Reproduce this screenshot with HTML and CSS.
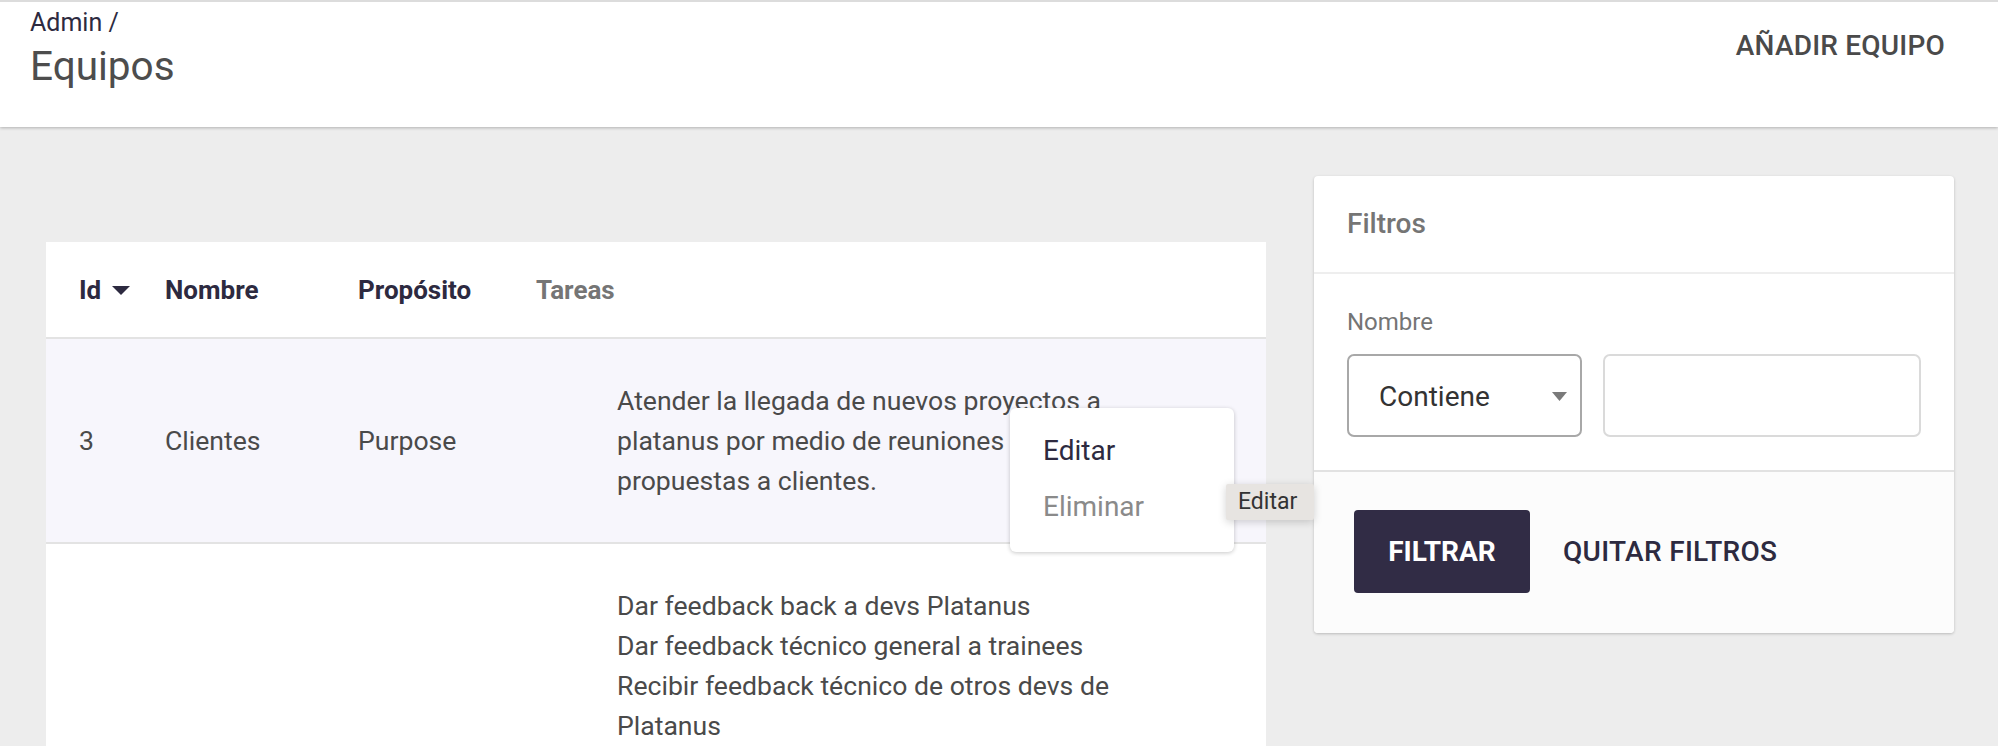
FILE: index.html
```html
<!DOCTYPE html>
<html lang="es">
<head>
<meta charset="utf-8">
<title>Equipos</title>
<link rel="stylesheet" href="styles.css">
</head>
<body>
<header class="topbar">
  <div class="titles">
    <div class="crumb">Admin /</div>
    <h1 class="title">Equipos</h1>
  </div>
  <a class="add-btn">AÑADIR EQUIPO</a>
</header>

<main class="content">
  <section class="table-col">
    <div class="table-card">
      <div class="row head">
        <div class="cell sort">Id
          <svg class="sort-icon" width="18" height="9" viewBox="0 0 18 9"><path d="M0 0H18L9 9Z" fill="#2d2a40"/></svg>
        </div>
        <div class="cell">Nombre</div>
        <div class="cell">Propósito</div>
        <div class="cell muted">Tareas</div>
      </div>

      <div class="row body hover">
        <div class="cell">3</div>
        <div class="cell">Clientes</div>
        <div class="cell">Purpose</div>
        <div class="cell tasks">
          <p>Atender la llegada de nuevos proyectos a platanus por medio de reuniones y envío de propuestas a clientes.</p>
        </div>
        <div class="menu">
          <div class="menu-item">Editar</div>
          <div class="menu-item disabled">Eliminar</div>
        </div>
        <div class="tooltip">Editar</div>
      </div>

      <div class="row body">
        <div class="cell"></div>
        <div class="cell"></div>
        <div class="cell"></div>
        <div class="cell tasks">
          <p>Dar feedback back a devs Platanus</p>
          <p>Dar feedback técnico general a trainees</p>
          <p>Recibir feedback técnico de otros devs de Platanus</p>
        </div>
      </div>
    </div>
  </section>

  <aside class="filters">
    <div class="filters-head">Filtros</div>
    <div class="filters-body">
      <label class="field-label">Nombre</label>
      <div class="field-row">
        <div class="select">
          <span>Contiene</span>
          <svg width="15" height="9" viewBox="0 0 15 9"><path d="M0 0H15L7.5 9Z" fill="#7a7a7a"/></svg>
        </div>
        <div class="input"></div>
      </div>
    </div>
    <div class="filters-foot">
      <button class="btn-primary">FILTRAR</button>
      <button class="btn-text">QUITAR FILTROS</button>
    </div>
  </aside>
</main>
</body>
</html>
```

FILE: styles.css
```css
* { box-sizing: border-box; }

html, body {
  margin: 0;
  height: 100%;
  overflow: hidden;
}

body {
  background: #ededed;
  font-family: Roboto, "Liberation Sans", Arial, sans-serif;
  color: #4a4a4a;
}

.topbar {
  display: flex;
  justify-content: space-between;
  align-items: flex-start;
  height: 127px;
  background: #ffffff;
  border-top: 2px solid #dcdcdc;
  padding: 7px 53px 0 30px;
  box-shadow: 0 1px 3px rgba(0, 0, 0, 0.25);
  position: relative;
  z-index: 1;
}

.crumb {
  font-size: 25px;
  line-height: 27px;
  color: #2d2a40;
}

.title {
  margin: 6px 0 0;
  font-size: 40.5px;
  line-height: 48px;
  font-weight: 400;
  color: #4d4d4d;
}

.add-btn {
  margin-top: 20px;
  font-size: 28px;
  line-height: 33px;
  font-weight: 500;
  color: #4a4a4a;
  letter-spacing: 0.2px;
}

.content {
  display: flex;
  align-items: flex-start;
  gap: 48px;
  padding: 49px 44px 0 46px;
}

.table-col {
  flex: 1;
  padding-top: 66px;
}

.table-card {
  background: #ffffff;
}

.row {
  display: grid;
  grid-template-columns: 86px 193px 178px 1fr;
  align-items: center;
  padding-left: 33px;
  position: relative;
}

.row.head {
  height: 97px;
  border-bottom: 2px solid #e3e3e3;
  font-size: 26px;
  font-weight: 700;
  color: #2d2a40;
}

.row.head .muted {
  color: #757575;
}

.sort {
  display: flex;
  align-items: center;
  gap: 11px;
}

.sort-icon {
  margin-top: 2px;
}

.row.body {
  padding-top: 42px;
  padding-bottom: 41px;
  font-size: 26.6px;
  line-height: 40px;
  color: #4a4a4a;
  border-bottom: 2px solid #e3e3e3;
}

.row.hover {
  background: #f7f6fc;
}

.row.body:last-child {
  border-bottom: none;
  padding-bottom: 80px;
}

.tasks {
  padding-left: 81px;
}

.tasks p {
  margin: 0;
  max-width: 545px;
}

.menu {
  position: absolute;
  left: 964px;
  top: 69px;
  width: 224px;
  height: 144px;
  background: #ffffff;
  border-radius: 6px;
  box-shadow: 0 1px 4px rgba(0, 0, 0, 0.22);
  padding: 15px 0 0 33px;
  z-index: 2;
  line-height: 56px;
}

.menu-item {
  font-size: 28px;
  line-height: 56px;
  color: #2d2a40;
}

.menu-item.disabled {
  color: #8a8a8a;
}

.tooltip {
  position: absolute;
  left: 1180px;
  top: 145px;
  width: 88px;
  height: 36px;
  background: #e7e4e1;
  color: #333333;
  font-size: 23px;
  line-height: 36px;
  padding-left: 12px;
  border-radius: 2px;
  box-shadow: 0 2px 8px rgba(0, 0, 0, 0.18);
  z-index: 3;
}

.filters {
  width: 640px;
  background: #ffffff;
  border-radius: 4px;
  box-shadow: 0 1px 3px rgba(0, 0, 0, 0.22);
  overflow: hidden;
}

.filters-head {
  height: 98px;
  display: flex;
  align-items: center;
  padding: 0 33px 2px;
  font-size: 28px;
  line-height: 33px;
  font-weight: 500;
  color: #757575;
  border-bottom: 2px solid #eeeeee;
}

.filters-body {
  padding: 34px 33px 33px;
  border-bottom: 2px solid #e2e2e2;
}

.field-label {
  display: block;
  font-size: 24px;
  line-height: 28px;
  color: #757575;
}

.field-row {
  display: flex;
  gap: 21px;
  margin-top: 18px;
}

.select {
  width: 235px;
  height: 83px;
  border: 2px solid #a8a8a8;
  border-radius: 7px;
  display: flex;
  align-items: center;
  justify-content: space-between;
  padding: 2px 13px 0 30px;
  font-size: 28px;
  color: #333333;
}

.input {
  width: 318px;
  height: 83px;
  border: 2px solid #dadada;
  border-radius: 7px;
}

.filters-foot {
  height: 161px;
  display: flex;
  align-items: center;
  gap: 33px;
  padding: 0 40px 2px;
  background: #fcfcfc;
}

.btn-primary {
  width: 176px;
  height: 83px;
  border: none;
  border-radius: 4px;
  background: #312c45;
  color: #ffffff;
  font-family: inherit;
  font-size: 28px;
  font-weight: 700;
  padding: 0;
}

.btn-text {
  border: none;
  background: none;
  padding: 0;
  font-family: inherit;
  font-size: 28px;
  font-weight: 500;
  letter-spacing: 0.3px;
  color: #2d2a40;
}
```
